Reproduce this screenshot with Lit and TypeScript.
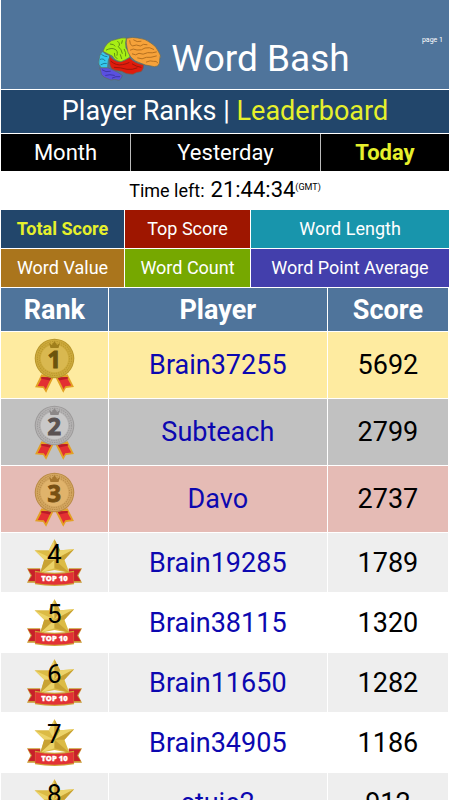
import { LitElement, html, css, svg } from "lit";
import { customElement, property, state } from "lit/decorators.js";
import { classMap } from "lit/directives/class-map.js";

type Player = { name: string; score: number };

const PLAYERS: Player[] = [
  { name: "Brain37255", score: 5692 },
  { name: "Subteach", score: 2799 },
  { name: "Davo", score: 2737 },
  { name: "Brain19285", score: 1789 },
  { name: "Brain38115", score: 1320 },
  { name: "Brain11650", score: 1282 },
  { name: "Brain34905", score: 1186 },
  { name: "stuie2", score: 912 },
];

const PERIODS = ["Month", "Yesterday", "Today"];

const CATEGORIES = [
  { label: "Total Score", tone: "navy" },
  { label: "Top Score", tone: "red" },
  { label: "Word Length", tone: "teal" },
  { label: "Word Value", tone: "brown" },
  { label: "Word Count", tone: "green" },
  { label: "Word Point Average", tone: "indigo" },
];

@customElement("brain-logo")
export class BrainLogo extends LitElement {
  static styles = css`
    :host { display: block; width: 63px; height: 44px; }
    svg { display: block; width: 100%; height: 100%; }
    .lobe { stroke: #5d6a5c; stroke-width: 2; stroke-linejoin: round; }
    .fold { fill: none; stroke-width: 3; stroke-linecap: round; stroke-linejoin: round; }
  `;
  render() {
    return html`<svg viewBox="55 55 189 132" aria-hidden="true">
      <path class="lobe" fill="#5a50e0" d="M60 147 L84 147 L98 153 Q116 160 128 170 Q127 180 118 185 Q104 180 94 184 Q84 180 74 176 Q62 168 64 160 Z" />
      <path class="fold" stroke="#3c36a4" d="M68 154 Q78 162 92 158 M78 170 Q90 166 104 170 M98 178 Q108 172 120 174" />
      <path class="lobe" fill="#35c8ee" d="M69 98 Q76 108 92 111 Q83 124 84 147 L64 147 Q54 138 58 124 Q58 108 69 98 Z" />
      <path class="fold" stroke="#1c7f9b" d="M66 108 Q74 114 82 114 M62 122 Q72 118 76 126 M64 138 Q74 132 80 134" />
      <path class="lobe" fill="#e01c0c" d="M90 111 Q98 126 122 130 Q138 124 150 117 Q164 134 192 138 Q192 152 184 159 Q170 160 160 167 Q140 168 126 158 Q106 156 96 150 Q86 136 90 111 Z" />
      <path class="fold" stroke="#9c160a" d="M94 128 Q110 142 128 138 Q140 136 148 132 M104 146 Q122 146 142 152 Q158 154 172 148 M158 136 Q170 144 184 146" />
      <path class="lobe" fill="#a8ee14" d="M70 98 Q74 84 84 74 Q94 64 110 62 Q124 56 140 58 Q136 74 139 88 Q150 100 151 115 Q138 124 124 129 Q104 126 98 112 Q84 106 70 98 Z" />
      <path class="fold" stroke="#5f9212" d="M80 94 Q96 86 106 92 Q116 96 112 110 M92 76 Q104 76 106 82 M114 68 Q124 76 116 84 Q126 92 128 104 M128 66 L126 74 M134 92 Q140 102 138 112 M104 104 Q102 114 112 120 M122 108 L126 120" />
      <path class="lobe" fill="#f6a23a" d="M141 59 Q158 54 174 58 Q198 60 212 72 Q230 82 236 98 Q246 110 240 122 Q242 134 234 142 Q224 146 214 142 Q196 140 184 134 Q164 128 154 116 Q142 100 142 86 Q138 72 141 59 Z" />
      <path class="fold" stroke="#b5701f" d="M150 66 Q150 78 158 82 Q170 76 182 82 Q190 74 202 78 M162 64 Q172 72 184 68 M152 94 Q160 88 172 94 Q186 96 196 88 Q210 84 222 92 M158 106 Q168 112 178 104 Q190 110 204 102 Q218 104 230 100 M174 118 Q188 124 200 116 Q212 118 230 112 M200 130 Q212 124 222 128 Q230 126 234 132" />
    </svg>`;
  }
}

@customElement("rank-badge")
export class RankBadge extends LitElement {
  static styles = css`
    :host { display: block; position: relative; }
    svg { display: block; margin: 0 auto; }
    .medal { width: 41px; height: 55px; }
    .star { width: 55px; height: 49px; }
    .place { font: 700 70px "Noto Sans", sans-serif; text-anchor: middle; stroke-width: 3; }
    .top { font: 800 23px "Open Sans", sans-serif; text-anchor: middle; fill: #fff; stroke: #fff; stroke-width: 1; }
    .number {
      position: absolute; inset: 0 0 18px; display: flex; align-items: center; justify-content: center;
      font-size: 26px; line-height: 1; color: #000;
    }
  `;
  @property({ type: Number }) rank = 1;

  private medal() {
    const [rim, band, face, ink, crown] = [
      ["#b8962c", "#cdaa3c", "#d9b850", "#6b540c", "#a07f1c"],
      ["#9c9a9a", "#b4b2b2", "#c9c8c8", "#5a5252", "#8c8888"],
      ["#b98a45", "#d3a660", "#e0b36b", "#785012", "#a6762e"],
    ][this.rank - 1];
    return html`<svg class="medal" viewBox="102 22 122 164" role="img" aria-label="Rank ${this.rank}">
      <path fill="#e3a024" d="M124 130 L160 140 L138 185 L129 171 L105 169 Z M202 130 L166 140 L189 185 L197 171 L221 168 Z" />
      <path fill="#e32f33" d="M127 138 L153 140 L137 175 L131 166 L113 165 Z M199 138 L173 140 L190 175 L195 166 L213 164 Z" />
      <path fill="#b81c28" d="M124 138 L154 140 L149 149 L122 143 Z M202 138 L172 140 L177 149 L204 143 Z" />
      <circle cx="163" cy="83" r="59" fill=${rim} />
      <circle cx="163" cy="83" r="56" fill=${band} />
      <circle cx="163" cy="83" r="51" fill="none" stroke=${rim} stroke-width="3" stroke-dasharray="4 3" />
      <circle cx="163" cy="83" r="45" fill="none" stroke=${rim} stroke-width="3" stroke-dasharray="3 4" />
      <circle cx="163" cy="83" r="41" fill=${face} />
      <path fill=${crown} d="M147 37 L155 43 L163 32 L171 43 L179 37 L175 52 L151 52 Z" />
      <text class="place" x="162" y="111" fill=${ink} stroke=${ink}>${this.rank}</text>
    </svg>`;
  }

  private star() {
    const facets = svg`
      <path fill="#dcbb45" d="M163 25 L180 58 L222 55 L193 87 L208 126 L163 118 L120 126 L132 87 L103 58 L146 58 Z" />
      <path fill="#ecd369" d="M163 25 L163 87 L146 58 Z M103 58 L163 87 L132 87 Z M120 126 L163 87 L163 112 Z M222 55 L163 87 L180 58 Z" />
      <path fill="#c8a233" d="M163 25 L180 58 L163 87 Z M222 55 L193 87 L163 87 Z M208 126 L163 87 L163 112 Z M120 126 L132 87 L163 87 Z" />`;
    return html`<svg class="star" viewBox="80 22 166 146" aria-hidden="true">
      <path fill="#c99a34" d="M80 112 L120 112 L120 156 L80 156 L91 134 Z M246 112 L206 112 L206 156 L246 156 L235 134 Z" />
      <path fill="#c7202a" d="M83 115 L120 115 L120 151 L84 151 L95 134 Z M243 115 L206 115 L206 151 L242 151 L231 134 Z" />
      ${facets}
      <path fill="#d0a236" d="M104 120 Q163 132 222 120 L222 161 Q163 171 104 161 Z" />
      <path fill="#e23136" d="M105 124 Q163 136 221 124 L221 157 Q163 167 105 157 Z" />
      <text class="top" x="163" y="151">TOP 10</text>
    </svg>
    <span class="number">${this.rank}</span>`;
  }

  render() {
    return this.rank <= 3 ? this.medal() : this.star();
  }
}

@customElement("app-root")
export class AppRoot extends LitElement {
  static styles = css`
    :host {
      display: block; height: 100vh; overflow-y: auto; scrollbar-width: none;
      background: #fff; color: #000; font-family: Roboto, sans-serif;
    }
    button {
      border: 0; margin: 0; padding: 0; border-radius: 0; color: #fff;
      font: inherit; background: none; cursor: pointer; white-space: nowrap;
    }
    a { text-decoration: none; color: inherit; }
    .bars { display: grid; gap: 1px; padding: 0 1px; }
    .banner {
      position: relative; display: flex; justify-content: center; align-items: center; gap: 10px;
      height: 89px; padding: 28px 2px 0 0; box-sizing: border-box; background: #4f749b; color: #fff;
    }
    h1 { margin: 0; font-size: 37px; font-weight: 400; line-height: 40px; }
    .page { position: absolute; top: 36px; right: 6px; font-size: 7px; line-height: 9px; }
    .title {
      margin: 0; background: #22466b; color: #fff; text-align: center;
      font-size: 27px; font-weight: 400; line-height: 43px;
    }
    .current { color: #e6f02c; }
    .periods { display: grid; grid-template-columns: 129fr 189fr 128fr; gap: 1px; background: #bbb; }
    .periods button { background: #000; font-size: 22px; line-height: 37px; }
    .periods .on, .categories .on { color: #e6f02c; font-weight: 700; }
    .timer {
      display: flex; justify-content: center; align-items: baseline; gap: 6px;
      height: 39px; line-height: 38px; font-size: 18px;
    }
    .clock { font-size: 22px; }
    .zone { font-size: 9px; line-height: 1; vertical-align: 7px; }
    .categories {
      display: grid; grid-template-columns: 123fr 125fr 198fr; gap: 1px; padding: 0 1px;
    }
    .categories button { font-size: 18px; line-height: 38px; }
    .navy { background: #22466b; }
    .red { background: #9e1600; }
    .teal { background: #1895ac; }
    .brown { background: #aa751c; }
    .green { background: #76a800; }
    .indigo { background: #433fac; }
    .ranks { padding-right: 1px; }
    table { width: 100%; table-layout: fixed; border-collapse: separate; border-spacing: 1px; font-size: 27px; }
    th, td { padding: 0; text-align: center; }
    th { height: 43px; background: #4f749b; color: #fff; font-weight: 700; }
    .rank { width: 24%; }
    .score { width: 27%; }
    td { height: 59px; background: #fff; }
    .podium td { height: 66px; }
    .shade td { background: #eee; }
    .gold td { background: #feeba0; }
    .silver td { background: #c1c1c1; }
    .bronze td { background: #e5bbb5; }
    td a { color: #0c08b0; }
  `;

  @state() private period = "Today";
  @state() private category = "Total Score";

  render() {
    return html`
      <header class="bars">
        <div class="banner">
          <brain-logo></brain-logo>
          <h1>Word Bash</h1>
          <span class="page">page 1</span>
        </div>
        <h2 class="title"><a href="#ranks">Player Ranks</a> | <a class="current" href="#leaderboard">Leaderboard</a></h2>
        <nav class="periods">
          ${PERIODS.map((p) => html`<button class=${classMap({ on: p === this.period })} @click=${() => (this.period = p)}>${p}</button>`)}
        </nav>
      </header>
      <div class="timer"><span>Time left:</span><span class="clock">21:44:34<span class="zone">(GMT)</span></span></div>
      <nav class="categories">
        ${CATEGORIES.map((c) => html`<button
          class=${classMap({ [c.tone]: true, on: c.label === this.category })}
          @click=${() => (this.category = c.label)}>${c.label}</button>`)}
      </nav>
      <main class="ranks">
        <table>
          <thead>
            <tr><th class="rank" scope="col">Rank</th><th scope="col">Player</th><th class="score" scope="col">Score</th></tr>
          </thead>
          <tbody>
            ${PLAYERS.map((p, i) => html`<tr class=${classMap({
              podium: i < 3, gold: i === 0, silver: i === 1, bronze: i === 2, shade: i > 2 && i % 2 === 1,
            })}>
              <td><rank-badge .rank=${i + 1}></rank-badge></td>
              <td><a href="#player">${p.name}</a></td>
              <td>${p.score}</td>
            </tr>`)}
          </tbody>
        </table>
      </main>
    `;
  }
}
